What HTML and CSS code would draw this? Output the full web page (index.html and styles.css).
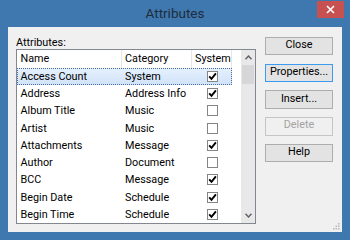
FILE: index.html
```html
<!DOCTYPE html>
<html>
<head>
<meta charset="utf-8">
<link rel="stylesheet" href="styles.css">
</head>
<body>
<div class="window">
  <div class="titlebar">
    <span></span>
    <span class="title">Attributes</span>
    <span class="close"><svg width="9" height="9" viewBox="0 0 9 9"><path d="M1 1 L8 8 M8 1 L1 8" stroke="#fff" stroke-width="1.6"/></svg></span>
  </div>
  <div class="client">
    <div class="left">
      <div class="label">Attributes:</div>
      <div class="listbox">
        <div class="listarea">
          <div class="row header">
            <div class="c1 hcell">Name</div>
            <div class="c2 hcell">Category</div>
            <div class="c3 hcell">System</div>
            <div class="c4 hcell"></div>
          </div>
          <div class="row selected">
            <div class="c1">Access Count</div><div class="c2">System</div><div class="c3"><span class="cb on"></span></div>
          </div>
          <div class="row">
            <div class="c1">Address</div><div class="c2">Address Info</div><div class="c3"><span class="cb on"></span></div>
          </div>
          <div class="row">
            <div class="c1">Album Title</div><div class="c2">Music</div><div class="c3"><span class="cb"></span></div>
          </div>
          <div class="row">
            <div class="c1">Artist</div><div class="c2">Music</div><div class="c3"><span class="cb"></span></div>
          </div>
          <div class="row">
            <div class="c1">Attachments</div><div class="c2">Message</div><div class="c3"><span class="cb on"></span></div>
          </div>
          <div class="row">
            <div class="c1">Author</div><div class="c2">Document</div><div class="c3"><span class="cb"></span></div>
          </div>
          <div class="row">
            <div class="c1">BCC</div><div class="c2">Message</div><div class="c3"><span class="cb on"></span></div>
          </div>
          <div class="row">
            <div class="c1">Begin Date</div><div class="c2">Schedule</div><div class="c3"><span class="cb on"></span></div>
          </div>
          <div class="row">
            <div class="c1">Begin Time</div><div class="c2">Schedule</div><div class="c3"><span class="cb on"></span></div>
          </div>
        </div>
        <div class="scrollbar">
          <div class="arrow"><svg width="7" height="5" viewBox="0 0 7 5"><path d="M0.5 4.2 L3.5 1 L6.5 4.2" fill="none" stroke="#606060" stroke-width="1.4"/></svg></div>
          <div class="thumb"></div>
          <div class="track"></div>
          <div class="arrow"><svg width="7" height="5" viewBox="0 0 7 5"><path d="M0.5 0.8 L3.5 4 L6.5 0.8" fill="none" stroke="#606060" stroke-width="1.4"/></svg></div>
        </div>
      </div>
    </div>
    <div class="buttons">
      <div class="btn">Close</div>
      <div class="btn default">Properties...</div>
      <div class="btn">Insert...</div>
      <div class="btn disabled">Delete</div>
      <div class="btn">Help</div>
    </div>
    <div class="grip"><svg width="7" height="7" viewBox="0 0 7 7"><g fill="#b8b8b8"><rect x="5" y="0" width="1.5" height="1.5"/><rect x="2.5" y="2.5" width="1.5" height="1.5"/><rect x="5" y="2.5" width="1.5" height="1.5"/><rect x="0" y="5" width="1.5" height="1.5"/><rect x="2.5" y="5" width="1.5" height="1.5"/><rect x="5" y="5" width="1.5" height="1.5"/></g></svg></div>
  </div>
</div>
</body>
</html>
```
FILE: styles.css
```css
* { box-sizing: border-box; }
html, body { margin: 0; padding: 0; }
body {
  width: 350px;
  height: 240px;
  overflow: hidden;
  font-family: Roboto, "Liberation Sans", sans-serif;
  font-size: 10.8px;
  color: #000;
}
.window {
  width: 350px;
  height: 240px;
  background: #3f78af;
  display: flex;
  flex-direction: column;
}
.titlebar {
  height: 27px;
  display: grid;
  grid-template-columns: 1fr auto 1fr;
  align-items: center;
}
.title {
  font-size: 13.5px;
  color: #1d2c3c;
  padding-bottom: 1px;
}
.close {
  justify-self: end;
  align-self: start;
  margin-top: 1px;
  margin-right: 6px;
  width: 27px;
  height: 17px;
  background: #c75050;
  display: flex;
  align-items: center;
  justify-content: center;
}
.client {
  flex: 1;
  margin: 0 8px 8px 8px;
  background: #f0f0f0;
  display: flex;
  padding: 10px 0 8px 8px;
  gap: 9px;
  position: relative;
}
.left {
  width: 240px;
  display: flex;
  flex-direction: column;
}
.label {
  height: 12px;
  line-height: 12px;
}
.listbox {
  flex: 1;
  border: 1px solid #828790;
  background: #fff;
  display: flex;
  overflow: hidden;
}
.listarea {
  flex: 1;
  overflow: hidden;
}
.row {
  display: flex;
  height: 17.25px;
  align-items: center;
  width: 215px;
}
.row.header {
  height: 18px;
  width: 225px;
}
.c1 { width: 105px; padding-left: 3.5px; white-space: nowrap; }
.c2 { width: 70px; padding-left: 3px; white-space: nowrap; overflow: hidden; }
.c3 { width: 40px; padding-left: 3px; display: flex; justify-content: center; }
.c4 { flex: 1; }
.hcell {
  height: 18px;
  line-height: 17px;
  border-right: 1px solid #e5e5e5;
}
.header .c3 { justify-content: flex-start; }
.header .c4 { border-right: none; }
.row.selected {
  background: linear-gradient(#e6f0fc, #d0e3fa);
  outline: 1px dotted #4a6e9a;
  outline-offset: -1px;
}
.cb {
  width: 11px;
  height: 11px;
  border: 1px solid #858585;
  background: #fff;
  display: block;
  margin-left: -2px;
}
.cb.on {
  background: #fff url("data:image/svg+xml;utf8,<svg xmlns='http://www.w3.org/2000/svg' width='9' height='9' viewBox='0 0 9 9'><path d='M1.2 4.4 L3.5 6.9 L7.9 1.4' fill='none' stroke='black' stroke-width='1.9'/></svg>") no-repeat center;
}
.scrollbar {
  width: 14px;
  background: #e8e8e8;
  display: flex;
  flex-direction: column;
}
.arrow {
  height: 15px;
  display: flex;
  align-items: center;
  justify-content: center;
}
.thumb {
  height: 19px;
  background: #d6d6d6;
  margin: 0 1px;
}
.track { flex: 1; }
.buttons {
  width: 68px;
  display: flex;
  flex-direction: column;
  gap: 8.25px;
}
.btn {
  height: 18.5px;
  border: 1px solid #adadad;
  background: #e3e3e3;
  display: flex;
  align-items: center;
  justify-content: center;
  line-height: 1;
  padding-bottom: 1px;
}
.btn.default {
  border-color: #3c9bf0;
}
.btn.disabled {
  color: #a3a3a3;
  border-color: #c5c5c5;
  background: #f0f0f0;
}
.grip {
  position: absolute;
  right: 2px;
  bottom: 2px;
  line-height: 0;
}
```
